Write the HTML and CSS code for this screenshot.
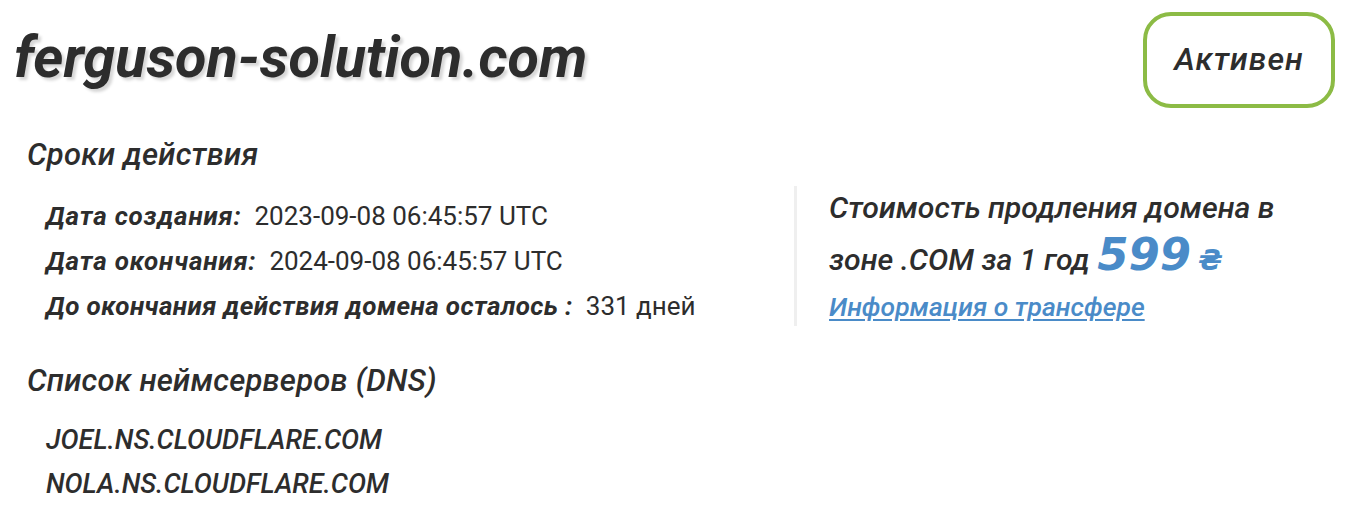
FILE: index.html
```html
<!DOCTYPE html>
<html lang="ru">
<head>
<meta charset="utf-8">
<link rel="stylesheet" href="styles.css">
</head>
<body>
<div class="page">
  <header class="head">
    <h1 class="domain">ferguson-solution.com</h1>
    <div class="status">Активен</div>
  </header>
  <div class="main">
    <section class="left">
      <h2 class="sec-title">Сроки действия</h2>
      <ul class="rows">
        <li><span class="lbl lbl-wide">Дата создания:</span><span class="val">2023-09-08 06:45:57 UTC</span></li>
        <li><span class="lbl lbl-wide">Дата окончания:</span><span class="val">2024-09-08 06:45:57 UTC</span></li>
        <li><span class="lbl">До окончания действия домена осталось :</span><span class="val">331 дней</span></li>
      </ul>
    </section>
    <aside class="right">
      <p class="price">Стоимость продления домена в зоне .COM за 1 год <span class="amount">599</span> <span class="cur">₴</span></p>
      <a class="transfer" href="#">Информация о трансфере</a>
    </aside>
  </div>
  <section class="dns">
    <h2 class="sec-title">Список неймсерверов (DNS)</h2>
    <ul class="ns">
      <li>JOEL.NS.CLOUDFLARE.COM</li>
      <li>NOLA.NS.CLOUDFLARE.COM</li>
    </ul>
  </section>
</div>
</body>
</html>
```
FILE: styles.css
```css
* { box-sizing: border-box; }
html, body { margin: 0; padding: 0; background: #fff; }
body {
  font-family: Roboto, "Liberation Sans", sans-serif;
  color: #2d2d2d;
}
.page { padding: 12px 17px 0 14px; }
.head {
  display: flex;
  justify-content: space-between;
  align-items: flex-start;
  height: 96px;
}
.domain {
  margin: 15px 0 0 0;
  font-size: 57.5px;
  font-weight: 700;
  font-style: italic;
  line-height: 62px;
  color: #2d2d2d;
  text-shadow: 3px 3px 3px rgba(0,0,0,0.16);
}
.status {
  width: 192px;
  height: 96px;
  border: 4px solid #8cbb45;
  border-radius: 28px;
  display: flex;
  align-items: center;
  justify-content: center;
  font-size: 32px;
  font-weight: 500;
  font-style: italic;
  letter-spacing: 1px;
  padding-bottom: 2px;
}
.main {
  display: flex;
  margin-top: 29px;
}
.left { width: 780px; padding-left: 13px; }
.sec-title {
  margin: 0;
  font-size: 31px;
  font-weight: 500;
  font-style: italic;
  line-height: 36px;
  letter-spacing: 0.2px;
}
.rows {
  list-style: none;
  margin: 21px 0 0 0;
  padding: 0 0 0 19px;
}
.rows li {
  font-size: 26px;
  line-height: 45px;
  height: 45px;
  white-space: nowrap;
}
.lbl { font-weight: 700; font-style: italic; margin-right: 13px; letter-spacing: 0.4px; }
.lbl-wide { letter-spacing: 0.8px; }
.val { font-weight: 400; }
.right {
  margin-top: 49px;
  border-left: 3px solid #efefef;
  padding-left: 32px;
  height: 140px;
}
.price {
  margin: -4px 0 0 0;
  width: 480px;
  font-size: 30.3px;
  font-weight: 500;
  font-style: italic;
  line-height: 52px;
}
.amount {
  color: #4a8bc8;
  font-family: "DejaVu Sans", sans-serif;
  font-size: 45px;
  font-weight: 700;
  line-height: 30px;
}
.cur {
  color: #4a8bc8;
  font-family: "DejaVu Sans", sans-serif;
  font-size: 28px;
  font-weight: 700;
  line-height: 30px;
}
.transfer {
  display: block;
  width: max-content;
  color: #4a8bc8;
  font-size: 26.5px;
  font-weight: 500;
  font-style: italic;
  line-height: 32px;
  text-decoration: underline;
  text-underline-offset: 3px;
  margin-top: 5px;
}
.dns { padding-left: 13px; margin-top: 33.5px; }
.ns {
  list-style: none;
  margin: 19px 0 0 0;
  padding: 0 0 0 19px;
}
.ns li {
  font-size: 27px;
  font-weight: 500;
  font-style: italic;
  line-height: 44px;
}
```
